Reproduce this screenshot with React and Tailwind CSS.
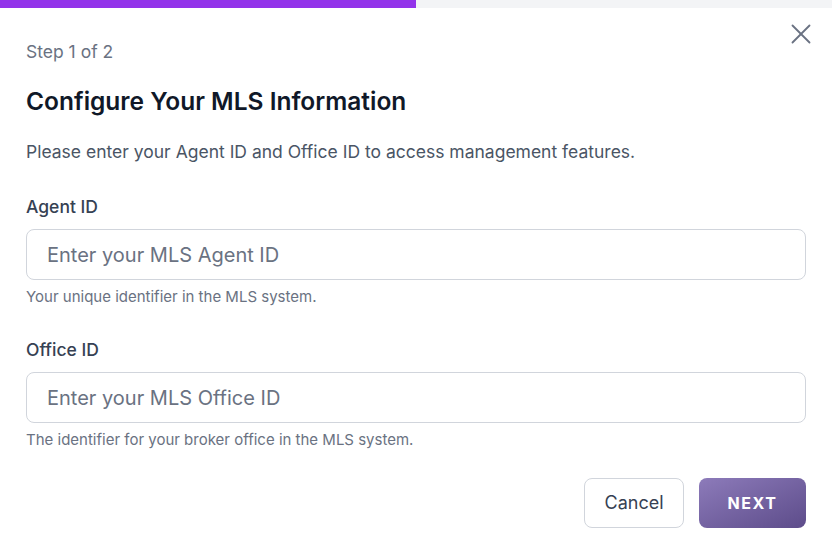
import { X } from 'lucide-react';

export default function App() {
  return (
    <div className="w-[832px] h-[553px] bg-white font-['Inter',sans-serif] overflow-hidden">
      {/* progress */}
      <div className="h-2 w-full bg-gray-100">
        <div className="h-2 w-1/2 bg-[#9333ea]" />
      </div>

      <div className="relative px-[26px]">
        <button className="absolute right-[14px] top-[9px] text-gray-500">
          <X size={34} strokeWidth={1.3} />
        </button>

        <p className="pt-[32px] text-[17.5px] text-gray-500 leading-6">Step 1 of 2</p>
        <h2 className="mt-[21px] text-[24.5px] font-semibold text-gray-900 leading-8">
          Configure Your MLS Information
        </h2>
        <p className="mt-[23px] text-[17.5px] text-gray-600 leading-6">
          Please enter your Agent ID and Office ID to access management features.
        </p>

        <div className="mt-[31px]">
          <label className="block text-[17.5px] font-medium text-gray-700 leading-6">Agent ID</label>
          <input
            className="mt-[10px] block w-full h-[51px] rounded-lg border border-gray-300 px-5 text-xl text-gray-900 placeholder:text-gray-500 outline-none"
            placeholder="Enter your MLS Agent ID"
          />
          <p className="mt-[7px] text-[15px] text-gray-500 leading-5">Your unique identifier in the MLS system.</p>
        </div>

        <div className="mt-[31px]">
          <label className="block text-[17.5px] font-medium text-gray-700 leading-6">Office ID</label>
          <input
            className="mt-[10px] block w-full h-[51px] rounded-lg border border-gray-300 px-5 text-xl text-gray-900 placeholder:text-gray-500 outline-none"
            placeholder="Enter your MLS Office ID"
          />
          <p className="mt-[7px] text-[15px] text-gray-500 leading-5">The identifier for your broker office in the MLS system.</p>
        </div>

        <div className="mt-[28px] flex justify-end gap-[15px]">
          <button className="h-[50px] w-[100px] rounded-lg border border-gray-300 bg-white text-lg text-gray-700">
            Cancel
          </button>
          <button className="h-[50px] w-[107px] rounded-lg bg-gradient-to-br from-[#8d7bba] to-[#5d4c8a] text-base font-bold tracking-[0.1em] text-white">
            NEXT
          </button>
        </div>
      </div>
    </div>
  );
}
